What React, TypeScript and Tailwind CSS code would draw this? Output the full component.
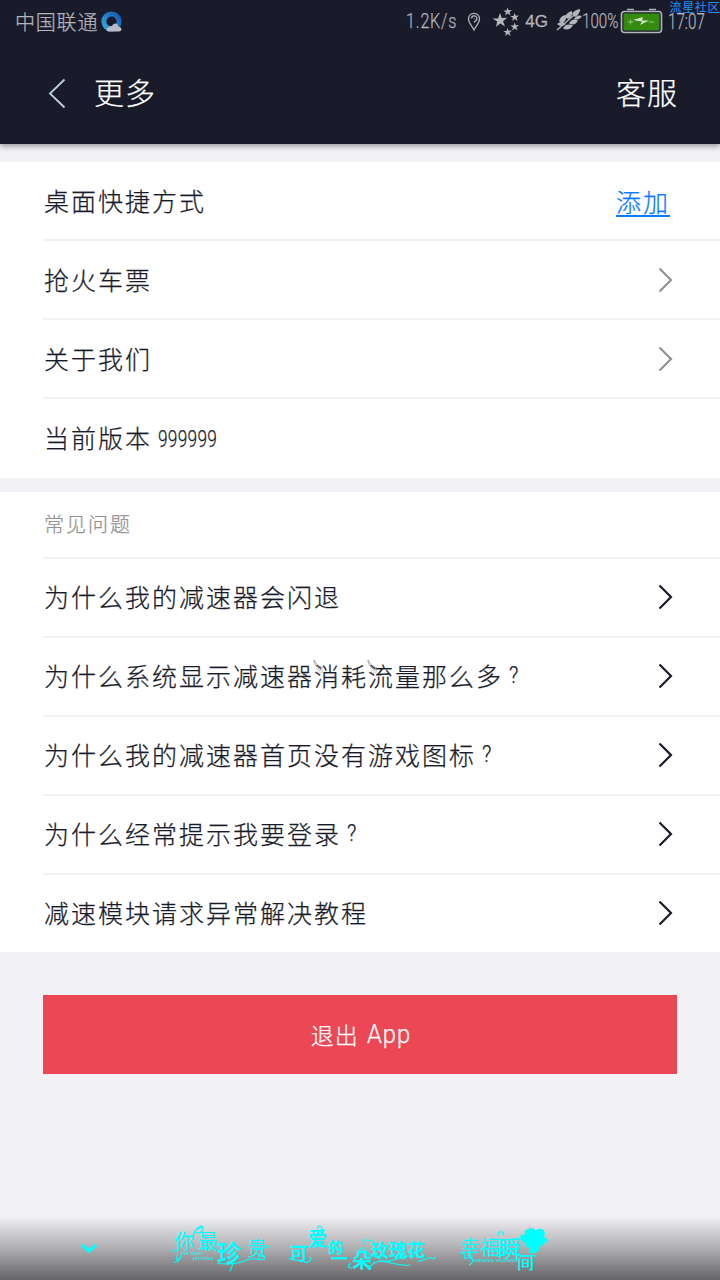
import React from 'react';

interface ChevronProps {
  className?: string;
}

interface RowProps {
  label: React.ReactNode;
  children?: React.ReactNode;
  className?: string;
}

const questions = [
  '为什么我的减速器会闪退',
  '为什么系统显示减速器消耗流量那么多?',
  '为什么我的减速器首页没有游戏图标?',
  '为什么经常提示我要登录?',
  '减速模块请求异常解决教程',
];

const Chevron: React.FC<ChevronProps> = ({ className }) => (
  <svg width="16" height="26" viewBox="0 0 16 26" fill="none" stroke="currentColor" strokeWidth="2.2" className={className}>
    <path d="M2.500 1.500 14 13 2.500 24.500" />
  </svg>
);

const Row: React.FC<RowProps> = ({ label, children, className = 'border-b-2' }) => (
  <div className={`ml-[43px] flex h-[79px] items-center justify-between border-[#f1f1f6] pr-[47px] ${className}`}>
    <span className="ml-px flex items-center whitespace-nowrap text-[25px] tracking-[2px]">{label}</span>
    {children}
  </div>
);

// Small feather that sits on the left dots of 消 and 流
const Feather: React.FC = () => (
  <svg width="13" height="17" viewBox="0 0 13 17" fill="none" stroke="#9a9ba3" strokeWidth="0.9" className="absolute -left-px top-0.5">
    <path d="M1 1c0 5 3 8 9 11M1 1c2 4 5 7 9 8" />
    <path d="M3 9c2 2 4 3 7 3M4 12c2 1 4 2 6 1" stroke="#d0d1d6" />
  </svg>
);

// Splits off a trailing question mark, which is drawn half width
const QuestionLabel: React.FC<{ text: string }> = ({ text }) => {
  const hasMark = text.endsWith('?');
  const body = hasMark ? text.slice(0, -1) : text;
  return (
    <>
      <span>
        {body.split(/([消流])/).map((part, index) =>
          part === '消' || part === '流' ? (
            <span key={index} className="relative">
              {part}
              <Feather />
            </span>
          ) : (
            part
          )
        )}
      </span>
      {hasMark && <span className="ml-1.5 mt-px inline-block origin-left scale-x-90 font-['Roboto'] text-[23px]">?</span>}
    </>
  );
};

const StatusBar: React.FC = () => (
  <div className="relative flex h-[43px] items-center text-[#b4b5ba]">
    <span className="ml-[15px] text-[20px] tracking-[0.8px]">中国联通</span>
    <svg width="22" height="22" viewBox="0 0 22 22" className="ml-[3px]">
      <defs>
        <linearGradient id="ring" x1="0" y1="1" x2="1" y2="0">
          <stop offset="0" stopColor="#35a9d8" />
          <stop offset="1" stopColor="#1459b5" />
        </linearGradient>
      </defs>
      <circle cx="10.5" cy="10.5" r="7.6" fill="none" stroke="url(#ring)" strokeWidth="5" />
      <path d="M8 20.500c-3 0-3-4 .2-4.300.8-1.500 2.200-1.500 2.800-.8 1-4 6-3.500 6.400.3 4 .2 4 4.800.6 4.800z" fill="#b9bcc4" />
    </svg>
    <span className="ml-[283px] w-[52px] font-['Roboto'] text-[21px] font-light tracking-[1px]">
      <span className="inline-block origin-left scale-x-[0.77]">1.2K/s</span>
    </span>
    <svg width="14" height="20" viewBox="0 0 14 20" fill="none" stroke="currentColor" strokeWidth="1.3" className="ml-[9px]">
      <path d="M7 18C5 14 1.500 11 1.500 6.800a5.500 5.500 0 0 1 11 0C12.500 11 9 14 7 18Z" />
      <path d="M4.500 6.500a2.700 2.700 0 1 1 4 2.400L7 10.500M7 6.500h.5" />
    </svg>
    <svg width="28" height="30" viewBox="0 0 28 30" fill="currentColor" className="ml-[11px]">
      <path d="m8 6 1.800 5 5.500-.3-4.300 3.500 2 5.300L8.300 16.500 4 19.800l1.200-5.400L.5 11.500l5.500.1z" />
      <path d="m15.500.5 1.200 2.800 3.300-.2-2.500 2.100 1.100 3.200-2.800-1.800-2.700 2 .9-3.200-2.700-1.800h3.200z" />
      <path d="m22.500 6 1.200 2.800 3.300-.2-2.500 2.100 1.100 3.200-2.800-1.800-2.700 2 .9-3.200-2.700-1.800h3.200z" />
      <path d="m22.500 15.500 1.200 2.800 3.300-.2-2.500 2.100 1.100 3.200-2.800-1.800-2.700 2 .9-3.200-2.700-1.800h3.200z" />
      <path d="m15.500 21 1.200 2.800 3.300-.2-2.500 2.100 1.100 3.200-2.800-1.800-2.700 2 .9-3.200-2.700-1.800h3.200z" />
    </svg>
    <span className="ml-[5px] w-[23px] font-['Liberation_Sans'] text-[17px] font-normal [-webkit-text-stroke:0.3px]">4G</span>
    <svg width="26" height="22" viewBox="0 0 26 22" fill="currentColor" className="mb-1 ml-[8px]">
      <path d="M1 21 24 1" stroke="currentColor" strokeWidth="1.3" />
      <path d="M1 15q5-4 9 0-5 4-9 0ZM7 19.500q3-6 10-3-4 6-10 3ZM3 12q2-6 7-6 1 6-4 8ZM9 8q2-5 7-6 1 6-4 8ZM13 14.500q3-6 9-3-3 6-9 3ZM16 5q2-4 8-5 0 5-5 8ZM18 10q3-5 8-3-3 5-8 3Z" />
    </svg>
    <span className="w-[38px] font-['Roboto'] text-[21px] font-light">
      <span className="inline-block origin-left scale-x-[0.72]">100%</span>
    </span>
    <svg width="43" height="26" viewBox="0 0 43 26" className="mb-[2px]">
      <path d="M7 1.500h7M29 1.500h7" stroke="#b4b5ba" strokeWidth="1.500" />
      <rect x="1.500" y="3.500" width="40" height="21" rx="3" fill="#1a1c2c" stroke="#b4b5ba" strokeWidth="1.600" />
      <rect x="3.500" y="5.500" width="36" height="17" rx="1" fill="#348b0d" />
      <path d="M8 14h5M10.500 11.500v5M29 14h5" stroke="#79b75e" strokeWidth="1.300" />
      <path d="m13 12 10-3-1 3.500h7l-9 4.500 2-3.500z" fill="#d7e4d2" />
    </svg>
    <span className="ml-[5px] w-[50px] font-['Roboto'] text-[22px] font-light">
      <span className="inline-block origin-left scale-x-[0.69]">17:07</span>
    </span>
    <span className="absolute right-0 top-0 whitespace-nowrap text-[12px] font-normal leading-[13px] tracking-[0.6px] text-[#2094ff] [-webkit-text-stroke:0]">
      流星社区
    </span>
  </div>
);

// Ornamental lettering of the navigation bar
const Slogan: React.FC = () => (
  <svg width="390" height="60" viewBox="170 1220 390 60" fill="#00ffff" className="ml-[72px]">
    <g className="font-['Noto_Sans_CJK_SC',sans-serif] text-[20px] font-normal [-webkit-text-stroke:0]">
      <text x="174.500" y="1249">你</text>
      <text x="198" y="1249">最</text>
      <text x="247" y="1255.500">贵</text>
      <text x="460" y="1254.500">幸</text>
      <text x="480" y="1254.500">福</text>
    </g>
    <g className="font-['Noto_Sans_CJK_SC',sans-serif] font-bold">
      <text x="217" y="1262" fontSize="24">珍</text>
      <text x="290" y="1260" fontSize="18">可</text>
      <text x="308" y="1246" fontSize="19">爱</text>
      <text x="328" y="1253" fontSize="15">的</text>
      <text x="331" y="1265" fontSize="17">一</text>
      <text x="352" y="1268" fontSize="20">朵</text>
      <text x="371" y="1257" fontSize="18">玫瑰花</text>
    </g>
    <g className="font-['Noto_Sans_CJK_SC',sans-serif] font-medium">
      <text x="498" y="1257" fontSize="23">瞬</text>
      <text x="517" y="1269" fontSize="17">间</text>
    </g>
    <g className="font-['Liberation_Serif',serif] text-[6px] italic">
      <text x="181" y="1255">our most</text>
      <text x="193" y="1260">precious</text>
      <text x="474" y="1262">romance moments</text>
    </g>
    <g fill="none" stroke="#00ffff" strokeWidth="1.1">
      <path d="M172 1252c3-5 7 0 5 5s2 4 5-3m-1 1c-1 5-3 8-7 7M193 1236c2-8 9-12 10-9s-3 8-7 5m-1-2c5-1 6-4 8-3" />
      <path d="M217 1263c10 2 20 1 30-3s14 2 17-1-2-5-6-1M256 1250c6 0 8-4 14-3M233 1264l-3 7" />
      <path d="M316 1234c5 0 7-3 6-6s-6-2-4 1M291 1257c-4 4 5 2 11 4M304 1262c6 2 9-4 5-5M325 1245c6 3 8 5 15 4M337 1253c7 2 6-5 2-4" />
      <path d="M366 1244c-5-1-3-5 0-4s8-2 9 6M352 1268c-5 0-4-5-1-4M368 1269c5 2 1-3 0-1s7-9 16-7 17-7 31-5M373 1263c13-5 22 4 37 2M360 1252c-1-6 6-5 6-1 4 7 11 4 15 8M418 1261c6 1 9-5 13-3s4-1 5-1" />
      <path d="M460 1253c9-2 1 8 7 5s8 4 2 7M467 1256c4-3 7 1 3 3M498 1236c0-6 7-5 5-1M516 1254c6 5 12 0 20 2" />
    </g>
    <path d="m529 1224 1 5c2-2 5-1 5 2 3-3 8-3 9 0 2 3 0 5-1 6 3 0 4 2 5 4-3 1-4 2-4 4-3 0-5 2-5 5-3 3-6 4-9 3-2-2-1-4 0-6-3 1-6-1-5-4-3-1-5-3-5-6 1-3 3-3 5-2-1-4 0-6 4-6z" />
  </svg>
);

const App: React.FC = () => {
  return (
    <div className="flex h-[1280px] w-[720px] flex-col overflow-hidden bg-[#f1f1f6] font-['Noto_Sans_CJK_SC',sans-serif] font-light leading-normal text-[#191b2b] [-webkit-text-stroke:0.25px]">
      <header className="h-[144px] shrink-0 bg-[#191b2b] shadow-[0_2px_6px_rgba(0,0,0,0.4)]">
        <StatusBar />
        <div className="flex h-[101px] items-center px-[43px] pb-[4px] text-[30px] text-white">
          <svg width="24" height="32" viewBox="0 0 24 32" fill="none" stroke="#bed0dc" strokeWidth="1.8" className="ml-1 mt-1">
            <path d="M17.500 1.500 3 15.500l14.500 14" />
          </svg>
          <h1 className="ml-[23px] tracking-[1px]">更多</h1>
          <span className="-mr-px ml-auto tracking-[1px]">客服</span>
        </div>
      </header>

      <section className="mt-[18px] bg-white">
        <Row label="桌面快捷方式">
          <a className="mr-[3px] mt-[3px] border-b-2 border-[#0a7aff] text-[25px] leading-[27px] tracking-[2px] text-[#0a7aff]">添加</a>
        </Row>
        <Row label="抢火车票">
          <Chevron className="text-[#929295]" />
        </Row>
        <Row label="关于我们">
          <Chevron className="text-[#929295]" />
        </Row>
        <Row
          className="pb-px"
          label={
            <>
              当前版本
              <span className="ml-1.5 mt-[2px] inline-block origin-left scale-x-[0.72] font-['Roboto'] text-[24px] tracking-[0.4px]">999999</span>
            </>
          }
        />
      </section>

      <section className="mt-[14px] h-[460px] shrink-0 overflow-hidden bg-white">
        <h2 className="ml-[43px] flex h-[67px] items-center border-b-2 border-[#f1f1f6] pb-px pl-px text-[20px] tracking-[2px] text-[#929295]">
          常见问题
        </h2>
        {questions.map((question, index) => (
          <Row
            key={question}
            className={index === questions.length - 1 ? 'pb-[4px]' : 'border-b-2 pb-[2px]'}
            label={<QuestionLabel text={question} />}
          >
            <Chevron />
          </Row>
        ))}
      </section>

      <button className="mx-[43px] mt-[43px] flex h-[79px] shrink-0 items-center justify-center bg-[#eb4755] text-[23px] tracking-[1px] text-white">
        <span className="ml-1">退出</span>
        <span className="ml-2 origin-left scale-x-95 font-['Roboto'] text-[25px] font-light">App</span>
      </button>

      <nav className="mt-auto flex h-[64px] items-end bg-linear-to-b from-[#f1f1f6] via-[#b0b0b3] via-50% to-[#656567]">
        <svg width="18" height="12" viewBox="0 0 18 12" fill="none" stroke="#00ffff" strokeWidth="3.500" className="mb-[25px] ml-[80px]">
          <path d="m2 2 7 6 7-6" />
        </svg>
        <Slogan />
      </nav>
    </div>
  );
};

export default App;
